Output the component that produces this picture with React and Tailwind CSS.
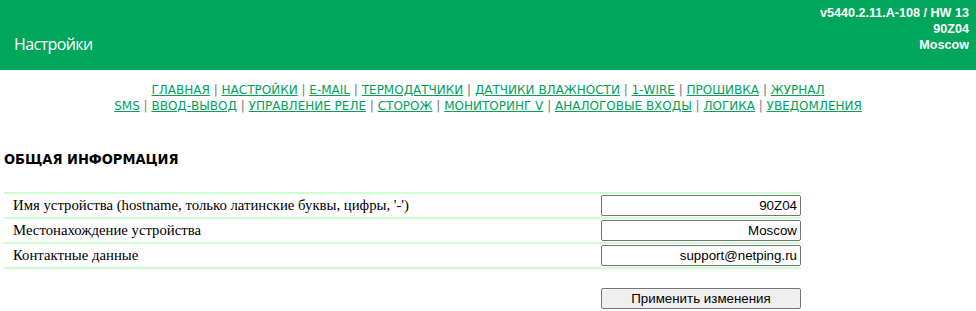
import React, { useState } from "react";

const MENU = [
  ["ГЛАВНАЯ", "НАСТРОЙКИ", "E-MAIL", "ТЕРМОДАТЧИКИ", "ДАТЧИКИ ВЛАЖНОСТИ", "1-WIRE", "ПРОШИВКА", "ЖУРНАЛ"],
  ["SMS", "ВВОД-ВЫВОД", "УПРАВЛЕНИЕ РЕЛЕ", "СТОРОЖ", "МОНИТОРИНГ V", "АНАЛОГОВЫЕ ВХОДЫ", "ЛОГИКА", "УВЕДОМЛЕНИЯ"],
];

function Header() {
  return (
    <div className="h-[70px] bg-[#00a65a] text-white flex justify-between">
      <div className="pl-[14px] pt-[32px] text-[16px] font-['Open_Sans',sans-serif] tracking-[-0.6px]">
        Настройки
      </div>
      <div className="pr-[7px] pt-[5px] text-right text-[12.6px] leading-[16px] font-bold font-['Liberation_Sans',Arial,sans-serif]">
        <div>v5440.2.11.A-108 / HW 13</div>
        <div>90Z04</div>
        <div>Moscow</div>
      </div>
    </div>
  );
}

function Menu() {
  return (
    <div className="mt-[12px] text-center text-[12px] leading-[16px] font-['DejaVu_Sans',Verdana,sans-serif]">
      {MENU.map((line, i) => (
        <div key={i}>
          {line.map((item, j) => (
            <span key={item}>
              <a href="#" className="text-[#00a05a] underline">
                {item}
              </a>
              {j < line.length - 1 && <span className="text-[#777]"> | </span>}
            </span>
          ))}
        </div>
      ))}
    </div>
  );
}

function Row({ label, value, onChange }) {
  return (
    <div className="h-[25px] border-b-2 border-[#ccffcc] flex items-center justify-between">
      <div className="pl-[9px] text-[14.75px] font-['Liberation_Serif',serif] text-black">{label}</div>
      <input
        type="text"
        value={value}
        onChange={(e) => onChange(e.target.value)}
        className="w-[200px] h-[21px] border border-[#767676] rounded-[2px] px-[3px] text-right text-[13.33px] font-['Liberation_Sans',Arial,sans-serif] text-black outline-none"
      />
    </div>
  );
}

export default function App() {
  const [hostname, setHostname] = useState("90Z04");
  const [location, setLocation] = useState("Moscow");
  const [contact, setContact] = useState("support@netping.ru");

  return (
    <div className="bg-white min-h-[311px]">
      <Header />
      <Menu />
      <div className="pl-[4px] pt-[35px] h-[55px] text-[14.5px] font-bold font-['DejaVu_Sans_Condensed','DejaVu_Sans',sans-serif] text-black">
        ОБЩАЯ ИНФОРМАЦИЯ
      </div>
      <div className="mt-[23px] ml-[4px] w-[797px] border-t-2 border-[#ccffcc]">
        <Row label="Имя устройства (hostname, только латинские буквы, цифры, '-')" value={hostname} onChange={setHostname} />
        <Row label="Местонахождение устройства" value={location} onChange={setLocation} />
        <Row label="Контактные данные" value={contact} onChange={setContact} />
      </div>
      <div className="ml-[601px] mt-[16px] w-[200px]">
        <button className="w-full h-[21px] bg-[#efefef] border border-[#767676] rounded-[2px] text-[13.33px] font-['Liberation_Sans',Arial,sans-serif] text-black">
          Применить изменения
        </button>
      </div>
    </div>
  );
}
